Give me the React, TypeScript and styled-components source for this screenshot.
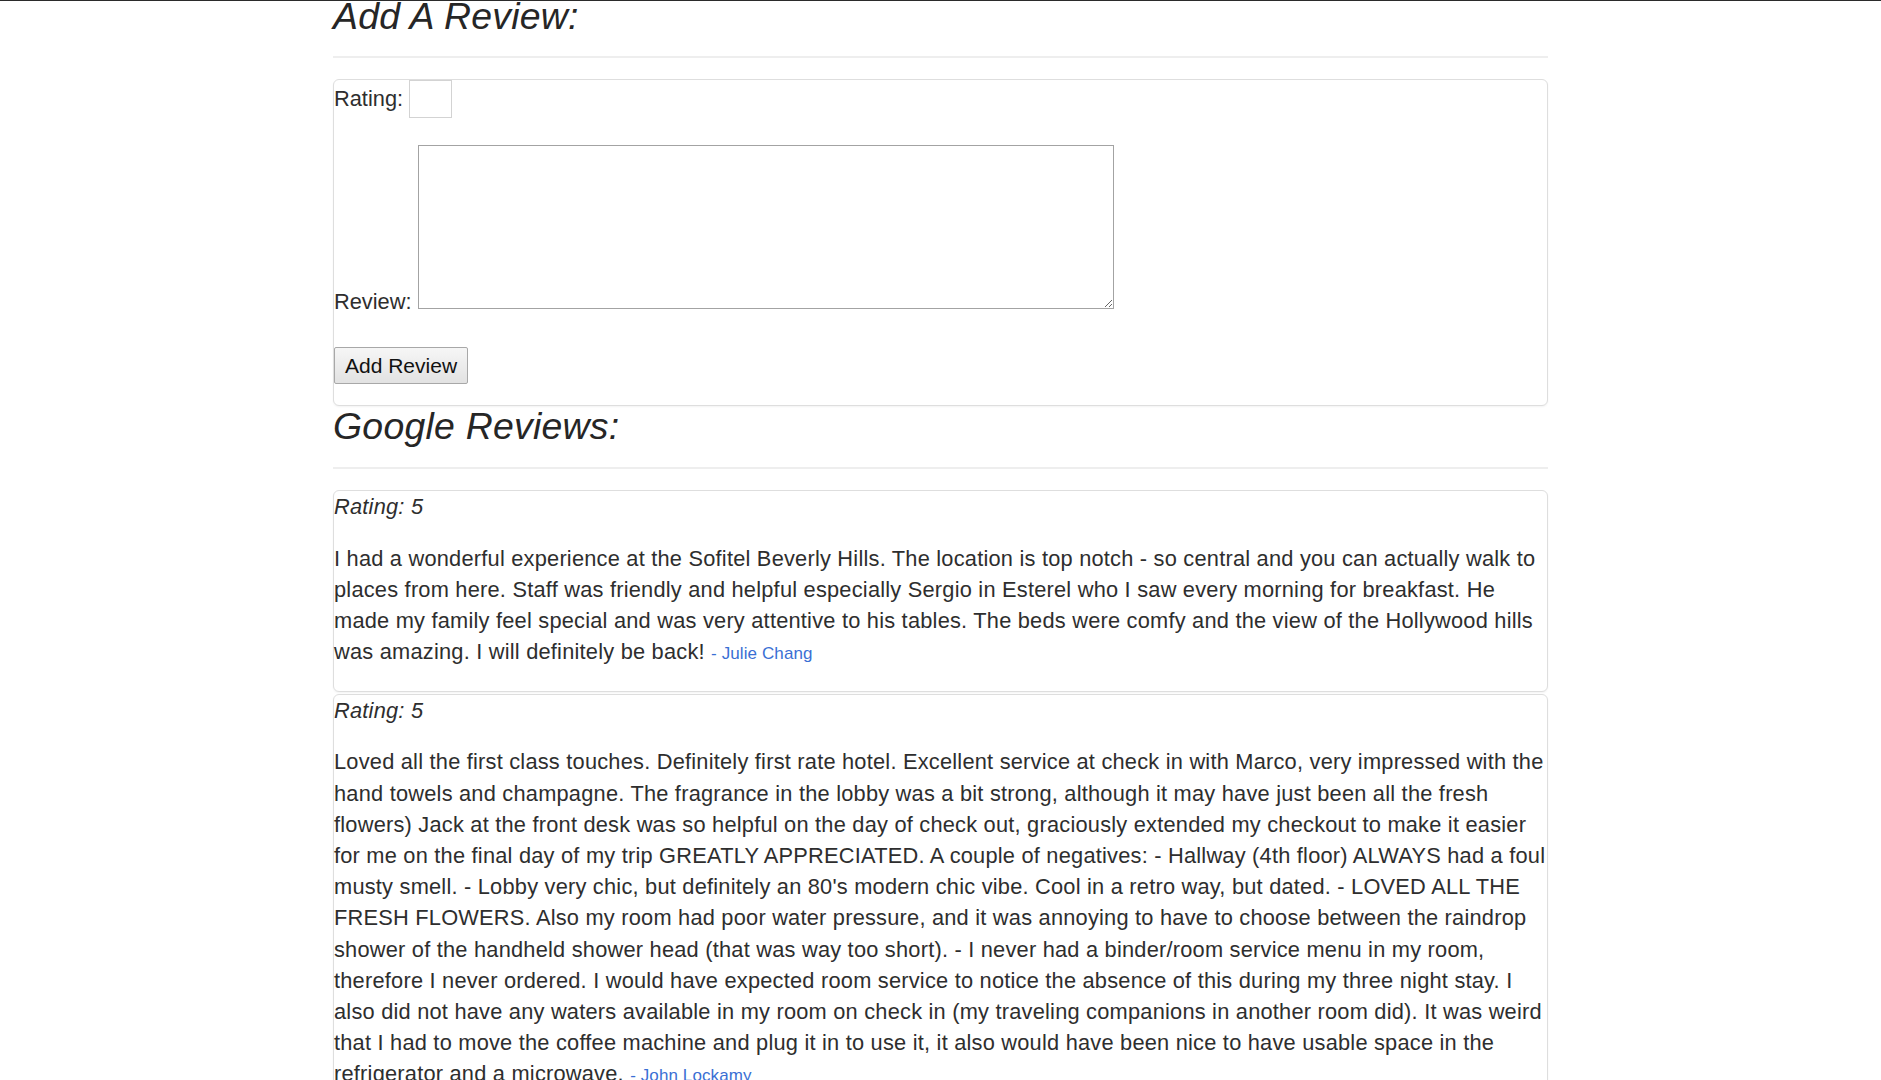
import React from "react";
import styled, { createGlobalStyle } from "styled-components";

const GlobalStyle = createGlobalStyle`
  html, body { margin: 0; padding: 0; background: #fff; }
  body {
    font-family: "Liberation Sans", Arial, sans-serif;
    font-size: 21.8px;
    line-height: 31.2px;
    color: #2e2e2e;
  }
  * { box-sizing: border-box; }
`;

const TopRule = styled.div`
  position: fixed;
  top: 0;
  left: 0;
  right: 0;
  height: 1px;
  background: #2b2b2b;
  z-index: 5;
`;

const Container = styled.main`
  width: 1215px;
  margin: 0 auto;
  display: flow-root;
`;

const SectionHeader = styled.header<{ $first?: boolean }>`
  margin-top: ${(p) => (p.$first ? "-4.5px" : "0")};
  padding-bottom: 19.5px;
  border-bottom: 2px solid #eee;
  margin-bottom: 21px;
`;

const Title = styled.h3`
  margin: 0;
  font-size: 37.4px;
  line-height: 41.1px;
  font-weight: 400;
  font-style: italic;
  letter-spacing: 0.25px;
  color: #262626;
`;

const Panel = styled.div`
  border: 1px solid #dedede;
  border-radius: 6px;
  box-shadow: 0 1px 2px rgba(0, 0, 0, 0.05);
  background: #fff;
`;

const AddPanel = styled(Panel)`
  padding-bottom: 21px;
`;

const RatingRow = styled.div`
  display: flex;
  align-items: baseline;
  gap: 6px;
`;

const ReviewRow = styled.div`
  margin-top: 27px;
`;

const Label = styled.label`
  font-weight: 400;
`;

const RatingInput = styled.input`
  width: 43px;
  height: 38px;
  border: 1px solid #d3d3d3;
  font: inherit;
  padding: 0 4px;
  background: #fff;
`;

const ReviewArea = styled.textarea`
  width: 696px;
  height: 164px;
  margin: 0 0 0 6px;
  border: 1px solid #a3a3a3;
  font: inherit;
  vertical-align: baseline;
`;

const SubmitButton = styled.button`
  display: block;
  margin-top: 30px;
  height: 37px;
  padding: 0 10px;
  font-family: "Liberation Sans", Arial, sans-serif;
  font-size: 21px;
  color: #111;
  border: 1px solid #a8a8a8;
  border-radius: 2px;
  background: linear-gradient(#f6f6f6, #e2e2e2);
`;

const ReviewCard = styled(Panel)`
  padding-bottom: 21px;
  margin-bottom: 2px;
`;

const RatingLine = styled.div`
  font-style: italic;
  letter-spacing: 0.22px;
  margin-bottom: 20.6px;
`;

const ReviewText = styled.p`
  margin: 0;
  letter-spacing: 0.22px;
`;

const Author = styled.small`
  font-size: 17px;
  letter-spacing: 0.1px;
  color: #3a6fd4;
`;

const reviews = [
  {
    rating: 5,
    text: "I had a wonderful experience at the Sofitel Beverly Hills. The location is top notch - so central and you can actually walk to places from here. Staff was friendly and helpful especially Sergio in Esterel who I saw every morning for breakfast. He made my family feel special and was very attentive to his tables. The beds were comfy and the view of the Hollywood hills was amazing. I will definitely be back!",
    author: "Julie Chang",
  },
  {
    rating: 5,
    text: "Loved all the first class touches. Definitely first rate hotel. Excellent service at check in with Marco, very impressed with the hand towels and champagne. The fragrance in the lobby was a bit strong, although it may have just been all the fresh flowers) Jack at the front desk was so helpful on the day of check out, graciously extended my checkout to make it easier for me on the final day of my trip GREATLY APPRECIATED. A couple of negatives: - Hallway (4th floor) ALWAYS had a foul musty smell. - Lobby very chic, but definitely an 80's modern chic vibe. Cool in a retro way, but dated. - LOVED ALL THE FRESH FLOWERS. Also my room had poor water pressure, and it was annoying to have to choose between the raindrop shower of the handheld shower head (that was way too short). - I never had a binder/room service menu in my room, therefore I never ordered. I would have expected room service to notice the absence of this during my three night stay. I also did not have any waters available in my room on check in (my traveling companions in another room did). It was weird that I had to move the coffee machine and plug it in to use it, it also would have been nice to have usable space in the refrigerator and a microwave.",
    author: "John Lockamy",
  },
];

export default function App() {
  return (
    <>
      <GlobalStyle />
      <TopRule />
      <Container>
        <SectionHeader $first>
          <Title>Add A Review:</Title>
        </SectionHeader>
        <AddPanel>
          <form onSubmit={(e) => e.preventDefault()}>
            <RatingRow>
              <Label htmlFor="rating">Rating:</Label>
              <RatingInput id="rating" type="text" />
            </RatingRow>
            <ReviewRow>
              <Label htmlFor="review">Review:</Label>
              <ReviewArea id="review" />
            </ReviewRow>
            <SubmitButton type="submit">Add Review</SubmitButton>
          </form>
        </AddPanel>
        <SectionHeader>
          <Title>Google Reviews:</Title>
        </SectionHeader>
        {reviews.map((r) => (
          <ReviewCard key={r.author}>
            <RatingLine>Rating: {r.rating}</RatingLine>
            <ReviewText>
              {r.text} <Author>- {r.author}</Author>
            </ReviewText>
          </ReviewCard>
        ))}
      </Container>
    </>
  );
}
